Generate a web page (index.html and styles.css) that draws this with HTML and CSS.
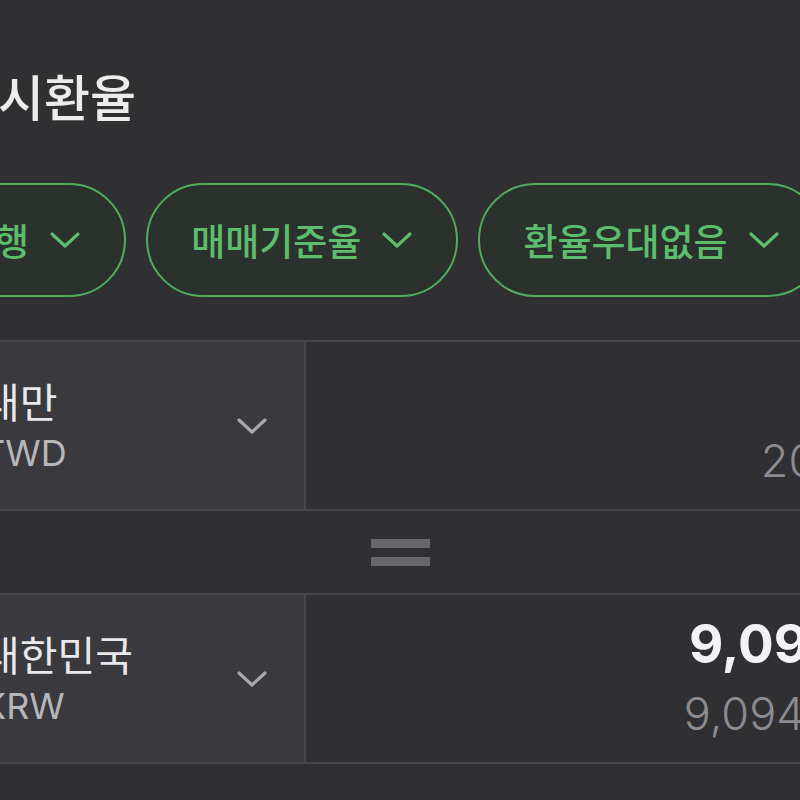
FILE: index.html
```html
<!DOCTYPE html>
<html lang="ko">
<head>
    <meta charset="UTF-8">
    <meta name="viewport" content="width=device-width, initial-scale=1.0">
    <title>환율 계산기</title>
    <link rel="stylesheet" href="styles.css">
</head>
<body>
    <div class="screen">
        <h2 class="title">즉시환율</h2>

        <div class="chips">
            <button class="chip">하나은행
                <svg class="chev" viewBox="0 0 32 18"><path d="M3 3 L16 15 L29 3"/></svg>
            </button>
            <button class="chip">매매기준율
                <svg class="chev" viewBox="0 0 32 18"><path d="M3 3 L16 15 L29 3"/></svg>
            </button>
            <button class="chip">환율우대없음
                <svg class="chev" viewBox="0 0 32 18"><path d="M3 3 L16 15 L29 3"/></svg>
            </button>
        </div>

        <div class="calc-row">
            <div class="currency">
                <div class="label">
                    <div class="name">대만</div>
                    <div class="code">TWD</div>
                </div>
                <svg class="chev gray" viewBox="0 0 32 18"><path d="M3 3 L16 15 L29 3"/></svg>
            </div>
            <div class="amount">
                <div class="value">&nbsp;</div>
                <div class="sub">200</div>
            </div>
        </div>

        <div class="equals">
            <span></span>
            <span></span>
        </div>

        <div class="calc-row">
            <div class="currency">
                <div class="label">
                    <div class="name">대한민국</div>
                    <div class="code">KRW</div>
                </div>
                <svg class="chev gray" viewBox="0 0 32 18"><path d="M3 3 L16 15 L29 3"/></svg>
            </div>
            <div class="amount">
                <div class="value">9,094</div>
                <div class="sub">9,094.4</div>
            </div>
        </div>
    </div>
</body>
</html>
```

FILE: styles.css
```css
body {
    margin: 0;
    background-color: #303032;
    overflow: hidden;
    font-family: Inter, "Noto Sans CJK KR", sans-serif;
}
.screen {
    margin-left: -60px;
    width: 920px;
}
.title {
    margin: 0;
    padding: 63px 0 0 12px;
    font-size: 50px;
    line-height: 64px;
    font-weight: 500;
    color: #ececec;
    font-family: "Noto Sans CJK KR", sans-serif;
}

/* filter chips, scrolled sideways */
.chips {
    display: flex;
    gap: 20px;
    margin: 56px 0 0 -92px;
}
.chip {
    flex: none;
    display: flex;
    align-items: center;
    gap: 20px;
    height: 114px;
    padding: 0 43px;
    background-color: #2b312d;
    border: 2.5px solid #4fae5e;
    border-radius: 57px;
    color: #5cbd6c;
    font-family: "Noto Sans CJK KR", sans-serif;
    font-size: 37px;
    font-weight: 500;
}
.chev {
    width: 32px;
    height: 18px;
    fill: none;
    stroke: #5cbd6c;
    stroke-width: 3.2;
    stroke-linecap: round;
    stroke-linejoin: round;
}
.chev.gray {
    stroke: #a9a9ac;
}

/* converter rows */
.calc-row {
    display: grid;
    grid-template-columns: 366px 1fr;
    height: 167px;
    border-top: 2px solid #47474a;
    border-bottom: 2px solid #47474a;
}
.chips + .calc-row {
    margin-top: 43px;
}
.currency {
    display: flex;
    align-items: center;
    justify-content: space-between;
    padding: 0 36px 0 42px;
    background-color: #3a393e;
    border-right: 2px solid #47474a;
}
.name {
    font-family: "Noto Sans CJK KR", sans-serif;
    font-size: 41px;
    line-height: 54px;
    color: #e9e9eb;
}
.code {
    font-size: 36px;
    line-height: 52px;
    color: #b7b7ba;
}
.amount {
    display: flex;
    flex-direction: column;
    justify-content: center;
    padding-right: 16px;
    text-align: right;
    background-color: #303033;
}
.value {
    font-size: 53px;
    line-height: 70px;
    font-weight: 700;
    color: #f2f2f4;
}
.sub {
    font-size: 45px;
    line-height: 70px;
    font-weight: 300;
    color: #8c8c90;
}

.equals {
    height: 82px;
    display: flex;
    flex-direction: column;
    align-items: center;
    justify-content: center;
    gap: 9px;
}
.equals span {
    width: 59px;
    height: 9px;
    background-color: #68686b;
}
```
